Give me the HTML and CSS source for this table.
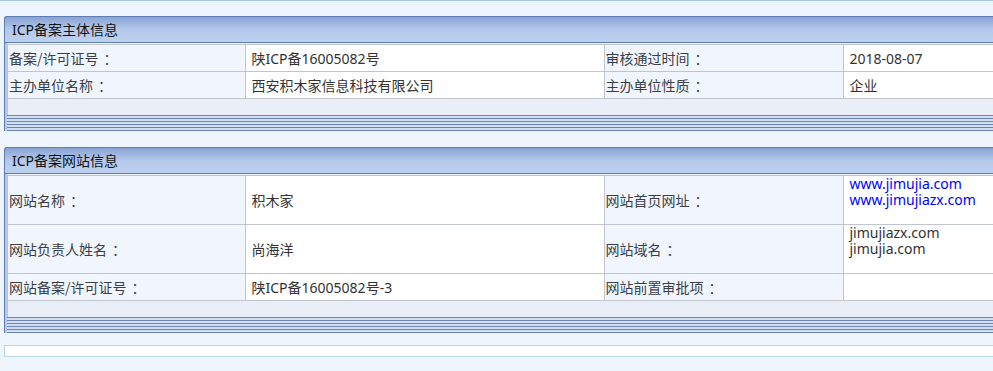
FILE: index.html
```html
<!DOCTYPE html>
<html lang="zh-CN">
<head>
<meta charset="utf-8">
<title>ICP备案信息</title>
<link rel="stylesheet" href="styles.css">
</head>
<body>
<div class="topline"></div>
<div class="page">
  <section class="panel">
    <div class="panel-head">ICP备案主体信息</div>
    <div class="panel-main">
      <div class="panel-inner">
        <table class="info">
          <colgroup><col class="c1"><col class="c2"><col class="c3"><col class="c4"></colgroup>
          <tr>
            <td class="lbl">备案/许可证号<span class="colon">：</span></td>
            <td class="val">陕ICP备16005082号</td>
            <td class="lbl">审核通过时间<span class="colon">：</span></td>
            <td class="val">2018-08-07</td>
          </tr>
          <tr>
            <td class="lbl">主办单位名称<span class="colon">：</span></td>
            <td class="val">西安积木家信息科技有限公司</td>
            <td class="lbl">主办单位性质<span class="colon">：</span></td>
            <td class="val">企业</td>
          </tr>
        </table>
        <div class="panel-foot"></div>
      </div>
      <div class="stripes"></div>
    </div>
  </section>

  <section class="panel">
    <div class="panel-head">ICP备案网站信息</div>
    <div class="panel-main">
      <div class="panel-inner">
        <table class="info">
          <colgroup><col class="c1"><col class="c2"><col class="c3"><col class="c4"></colgroup>
          <tr class="tall">
            <td class="lbl">网站名称<span class="colon">：</span></td>
            <td class="val">积木家</td>
            <td class="lbl">网站首页网址<span class="colon">：</span></td>
            <td class="val"><div class="multi"><a class="link" href="#">www.jimujia.com</a><br><a class="link" href="#">www.jimujiazx.com</a></div></td>
          </tr>
          <tr class="tall">
            <td class="lbl">网站负责人姓名<span class="colon">：</span></td>
            <td class="val">尚海洋</td>
            <td class="lbl">网站域名<span class="colon">：</span></td>
            <td class="val"><div class="multi">jimujiazx.com<br>jimujia.com</div></td>
          </tr>
          <tr>
            <td class="lbl">网站备案/许可证号<span class="colon">：</span></td>
            <td class="val">陕ICP备16005082号-3</td>
            <td class="lbl">网站前置审批项<span class="colon">：</span></td>
            <td class="val"></td>
          </tr>
        </table>
        <div class="panel-foot"></div>
      </div>
      <div class="stripes"></div>
    </div>
  </section>

  <div class="bar"></div>
</div>
</body>
</html>
```

FILE: styles.css
```css
html, body {
  margin: 0;
  padding: 0;
}
body {
  background: #eff5fd;
  font-family: "Noto Sans", "Noto Sans CJK SC", sans-serif;
  font-size: 14px;
  color: #333;
  overflow: hidden;
}
.topline {
  border-top: 1px solid #a9c7e8;
}
.page {
  padding: 15px 0 0 4px;
  width: 1220px;
}
.panel {
  margin-bottom: 16px;
}
.panel-head {
  height: 25px;
  line-height: 25px;
  padding-left: 7px;
  color: #111;
  border: 1px solid #5d7db3;
  border-right: none;
  border-radius: 3px 0 0 0;
  background: linear-gradient(#89a3d4, #b4c9eb 50%, #bdd0ef);
}
.panel-main {
  border-left: 1px solid #5d7db3;
  padding-left: 2px;
  background: #b3c8ea;
}
.panel-inner {
  border-top: 1px solid #eef3fb;
  border-left: 1px solid #c0c4cc;
  background: #e9eef7;
}
.info {
  border-collapse: collapse;
  table-layout: fixed;
  width: 1194px;
}
.info .c1 { width: 237px; }
.info .c2 { width: 359px; }
.info .c3 { width: 239px; }
.info .c4 { width: 359px; }
.info td {
  border: 1px solid #c0c4cc;
  height: 26px;
  padding: 0;
  white-space: nowrap;
  overflow: hidden;
}
.info td:first-child {
  border-left: none;
}
.info tr.tall td {
  height: 48px;
}
.lbl {
  background: #f1f6fe;
  padding-left: 1px !important;
  color: #3a3f47;
  font-family: "Noto Sans CJK SC", sans-serif;
}
.colon {
  margin-left: 5px;
}
.val {
  background: #fff;
  padding-left: 6px !important;
}
.multi {
  line-height: 16px;
  height: 48px;
}
.link {
  color: #0000ff;
  text-decoration: none;
}
.panel-foot {
  height: 16px;
}
.stripes {
  height: 16px;
  background: repeating-linear-gradient(to bottom, #6b86b4 0, #6b86b4 1px, #d3dff1 1px, #d3dff1 3px);
}
.bar {
  margin-top: -4px;
  height: 10px;
  background: #fff;
  border: 1px solid #b7d7e7;
  border-right: none;
}
```
